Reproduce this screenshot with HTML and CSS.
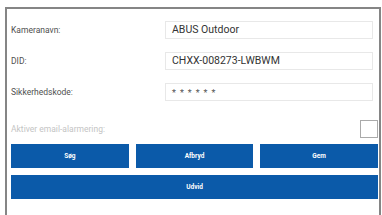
FILE: index.html
```html
<!DOCTYPE html>
<html lang="da">
<head>
    <meta charset="UTF-8">
    <title>Kamera</title>
    <link rel="stylesheet" href="styles.css">
</head>
<body>
<div class="frame">
    <div class="field">
        <label>Kameranavn:</label>
        <div class="input">ABUS Outdoor</div>
    </div>
    <div class="field">
        <label>DID:</label>
        <div class="input">CHXX-008273-LWBWM</div>
    </div>
    <div class="field">
        <label>Sikkerhedskode:</label>
        <div class="input pw">******</div>
    </div>
    <div class="check-row">
        <span class="muted">Aktiver email-alarmering:</span>
        <span class="checkbox"></span>
    </div>
    <div class="btn-row">
        <button class="btn">Søg</button>
        <button class="btn">Afbryd</button>
        <button class="btn">Gem</button>
    </div>
    <button class="btn wide">Udvid</button>
</div>
</body>
</html>
```
FILE: styles.css
```css
body {
    margin: 0;
    width: 382px;
    height: 215px;
    background: #fff;
    font-family: Roboto, "Liberation Sans", sans-serif;
    overflow: hidden;
}
.frame {
    margin: 7px 0 0 5px;
    width: 367px;
    height: 194px;
    border: 2px solid #858585;
    border-bottom: 1px solid #ddd;
    padding: 12px 1px 0 4px;
}
.field {
    display: flex;
    align-items: center;
    height: 18px;
    margin-bottom: 13px;
}
.field label {
    width: 154px;
    font-size: 8.5px;
    color: #505050;
}
.input {
    width: 200px;
    height: 16px;
    border: 1px solid #e8e8e8;
    padding-left: 6px;
    font-size: 10.5px;
    line-height: 16px;
    color: #333;
}
.pw {
    letter-spacing: 4px;
    font-size: 9px;
    line-height: 19px;
    color: #555;
}
.check-row {
    display: flex;
    justify-content: space-between;
    align-items: center;
    margin-top: 19px;
    height: 18px;
}
.muted {
    font-size: 8.5px;
    color: #c4c4c4;
}
.checkbox {
    width: 16px;
    height: 16px;
    border: 1px solid #aaa;
}
.btn-row {
    display: grid;
    grid-template-columns: repeat(3, 1fr);
    gap: 7px;
    margin-top: 6px;
}
.btn {
    height: 24px;
    background: #0b5aa9;
    border: none;
    color: #fff;
    font-family: Roboto, "Liberation Sans", sans-serif;
    font-size: 6.5px;
    font-weight: bold;
    padding: 0;
}
.wide {
    display: block;
    width: 100%;
    margin-top: 7px;
}
```
